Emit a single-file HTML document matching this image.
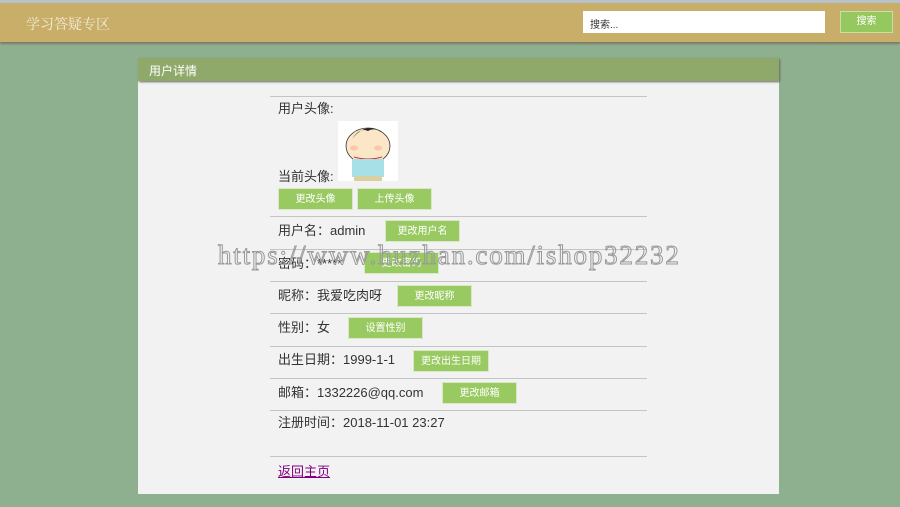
<!DOCTYPE html>
<html><head><meta charset="utf-8"><style>
*{margin:0;padding:0;box-sizing:border-box}
body{width:900px;height:507px;overflow:hidden;background:#8fb08f;font-family:"Liberation Sans","Noto Sans CJK SC",sans-serif;position:relative;color:#333}
.top{position:absolute;left:0;top:0;width:900px;height:3px;background:#b8c4cc}
.hdr{position:absolute;left:0;top:3px;width:900px;height:39px;background:#c9ae6a;box-shadow:0 2px 2px #7a7a6a}
.logo{position:absolute;left:26px;top:11px;color:#f3ecd8;font-size:14px;font-family:"Liberation Serif","Noto Serif CJK SC",serif}
.search{position:absolute;left:583px;top:11px;width:242px;height:22px;background:#fff;font-size:10px;padding:5px 7px;color:#333}
.sbtn{position:absolute;left:840px;top:11px;width:53px;height:22px;background:#96c860;border:1px solid #c8e0a8;color:#fff;font-size:10px;text-align:center;line-height:20px}
.panel{position:absolute;left:138px;top:58px;width:641px;height:436px;background:#f2f2f2}
.ph{position:absolute;left:138px;top:58px;width:641px;height:23px;background:#8fa96a;color:#fff;font-size:12px;padding:4px 11px;box-shadow:1px 1px 2px #666}
.ln{position:absolute;left:270px;width:377px;height:1px;background:#c4c4c4}
.t{position:absolute;font-size:13px;white-space:nowrap;color:#333;line-height:16px}
.b{position:absolute;height:22px;background:#99ca62;color:#fff;font-size:10px;text-align:center;line-height:22px;border:1px solid #d8e8c8}
.wm{position:absolute;left:218px;top:240px;font-family:"Liberation Serif",serif;font-size:27px;color:transparent;-webkit-text-stroke:1px #999;letter-spacing:1.8px;white-space:nowrap}
a{position:absolute;left:278px;top:461px;font-size:13px;color:#800080;text-decoration:underline}
</style></head><body>
<div class="top"></div>
<div class="hdr"><div class="logo">学习答疑专区</div></div>
<div class="search">搜索...</div>
<div class="sbtn">搜索</div>
<div class="panel"></div>
<div class="ph">用户详情</div>
<div class="ln" style="top:96px"></div>
<div class="t" style="left:278px;top:101px">用户头像:</div>
<svg style="position:absolute;left:338px;top:121px" width="60" height="60" viewBox="0 0 60 60">
<rect width="60" height="60" fill="#fff"/>
<ellipse cx="30" cy="25" rx="22" ry="18" fill="#fbe6c8" stroke="#333" stroke-width="0.8"/>
<path d="M14 18 Q28 0 44 12 Q36 6 30 10 Q22 6 14 18Z" fill="#222"/>
<ellipse cx="16" cy="27" rx="4" ry="2.5" fill="#f8c8a8"/><ellipse cx="40" cy="27" rx="4" ry="2.5" fill="#f8c8a8"/>
<path d="M16 36 Q30 40 44 36" stroke="#c33" fill="none"/>
<rect x="14" y="38" width="32" height="18" fill="#a8e0e8"/>
<rect x="16" y="55" width="28" height="5" fill="#d8d0a0"/>
</svg>
<div class="t" style="left:278px;top:169px">当前头像:</div>
<div class="b" style="left:278px;top:188px;width:75px">更改头像</div>
<div class="b" style="left:357px;top:188px;width:75px">上传头像</div>
<div class="ln" style="top:216px"></div>
<div class="t" style="left:278px;top:223px">用户名：admin</div>
<div class="b" style="left:385px;top:220px;width:75px">更改用户名</div>
<div class="ln" style="top:249px"></div>
<div class="t" style="left:278px;top:256px">密码：*****</div>
<div class="b" style="left:364px;top:252px;width:75px">更改密码</div>
<div class="ln" style="top:281px"></div>
<div class="t" style="left:278px;top:288px">昵称：我爱吃肉呀</div>
<div class="b" style="left:397px;top:285px;width:75px">更改昵称</div>
<div class="ln" style="top:313px"></div>
<div class="t" style="left:278px;top:320px">性别：女</div>
<div class="b" style="left:348px;top:317px;width:75px">设置性别</div>
<div class="ln" style="top:346px"></div>
<div class="t" style="left:278px;top:352px">出生日期：1999-1-1</div>
<div class="b" style="left:413px;top:350px;width:76px">更改出生日期</div>
<div class="ln" style="top:378px"></div>
<div class="t" style="left:278px;top:385px">邮箱：1332226@qq.com</div>
<div class="b" style="left:442px;top:382px;width:75px">更改邮箱</div>
<div class="ln" style="top:410px"></div>
<div class="t" style="left:278px;top:415px">注册时间：2018-11-01 23:27</div>
<div class="ln" style="top:456px"></div>
<a>返回主页</a>
<div class="wm">https://www.huzhan.com/ishop32232</div>
</body></html>
